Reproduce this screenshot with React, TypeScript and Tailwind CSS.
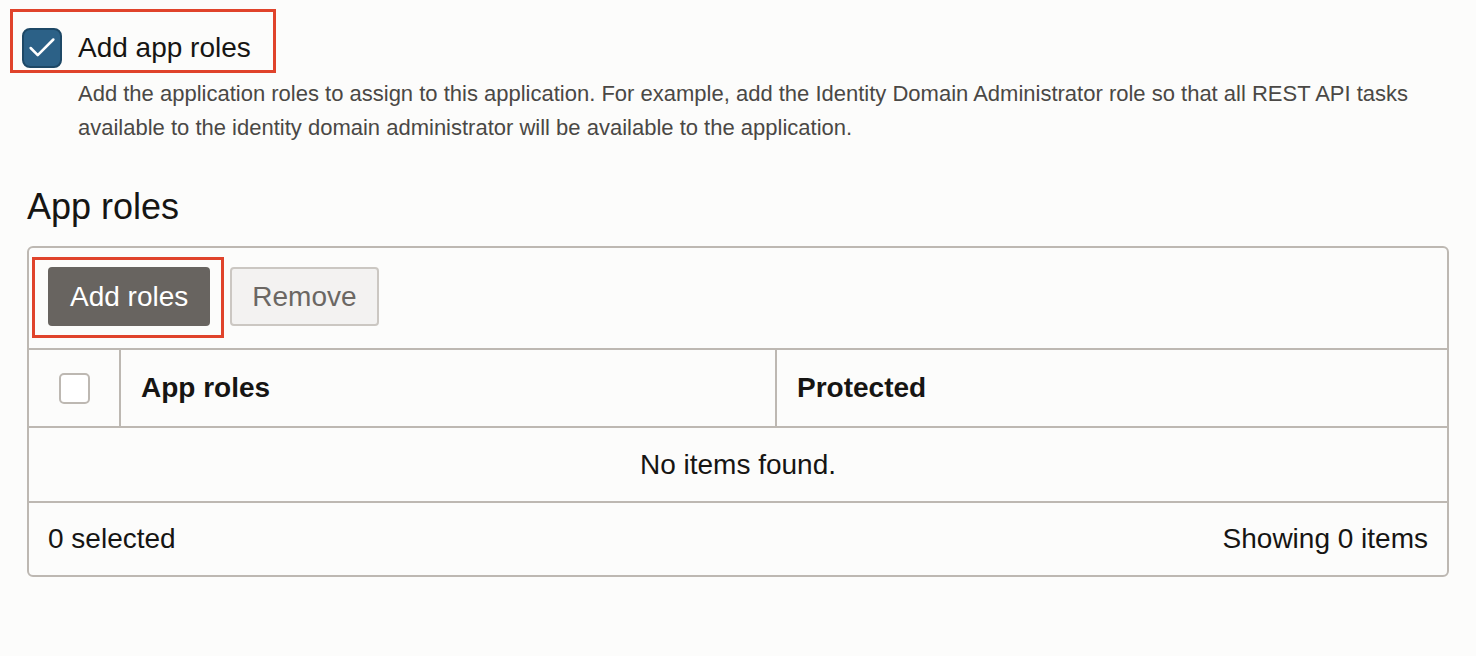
import { Check } from "lucide-react";

export default function App() {
  return (
    <div className="min-h-[656px] w-full bg-[#fcfcfb] text-[#161513] font-['Liberation_Sans',Arial,sans-serif]">
      <div className="pl-[10px] pt-[9px]">
        <div className="inline-flex items-center gap-[16px] border-[3px] border-[#e0432b] pl-[9px] pr-[22px] pt-[16px] pb-[2px]">
          <span className="flex items-center justify-center w-[40px] h-[40px] rounded-[8px] bg-[#2c6187] border-2 border-[#1d4866]">
            <Check className="w-[34px] h-[34px] text-white shrink-0" strokeWidth={1.8} />
          </span>
          <span className="text-[28px] leading-none">Add app roles</span>
        </div>
      </div>

      <p className="ml-[78px] mt-[4px] w-[1360px] text-[22px] leading-[34px] text-[#4a4845]">
        Add the application roles to assign to this application. For example, add the Identity Domain Administrator role so that all REST API tasks available to the identity domain administrator will be available to the application.
      </p>

      <h2 className="ml-[27px] mt-[42px] text-[36px] leading-[40px]">App roles</h2>

      <div className="ml-[27px] mr-[27px] mt-[19px] border-2 border-[#bdb8b2] rounded-[6px]">
        <div className="flex items-center gap-[6px] pl-[3px] pt-[9px] pb-[10px]">
          <div className="border-[3px] border-[#e0432b] pl-[13px] pr-[11px] pt-[7px] pb-[9px]">
            <button className="h-[59px] px-[22px] rounded-[4px] bg-[#686460] text-white text-[28px]">Add roles</button>
          </div>
          <button className="h-[59px] px-[20px] rounded-[4px] bg-[#f3f2f1] border-2 border-[#cbc7c2] text-[#6b6763] text-[28px] mb-[2px]">Remove</button>
        </div>

        <div className="flex h-[80px] border-t-2 border-b-2 border-[#bdb8b2]">
          <div className="w-[92px] flex items-center justify-center border-r-2 border-[#bdb8b2]">
            <span className="w-[31px] h-[31px] rounded-[5px] border-2 border-[#bdb8b2] bg-white" />
          </div>
          <div className="w-[656px] flex items-center pl-[20px] border-r-2 border-[#bdb8b2] font-bold text-[28px]">App roles</div>
          <div className="flex-1 flex items-center pl-[20px] font-bold text-[28px]">Protected</div>
        </div>

        <div className="h-[75px] flex items-center justify-center border-b-2 border-[#bdb8b2] text-[28px]">No items found.</div>

        <div className="h-[72px] flex items-center justify-between px-[19px] text-[28px]">
          <span>0 selected</span>
          <span>Showing 0 items</span>
        </div>
      </div>
    </div>
  );
}
